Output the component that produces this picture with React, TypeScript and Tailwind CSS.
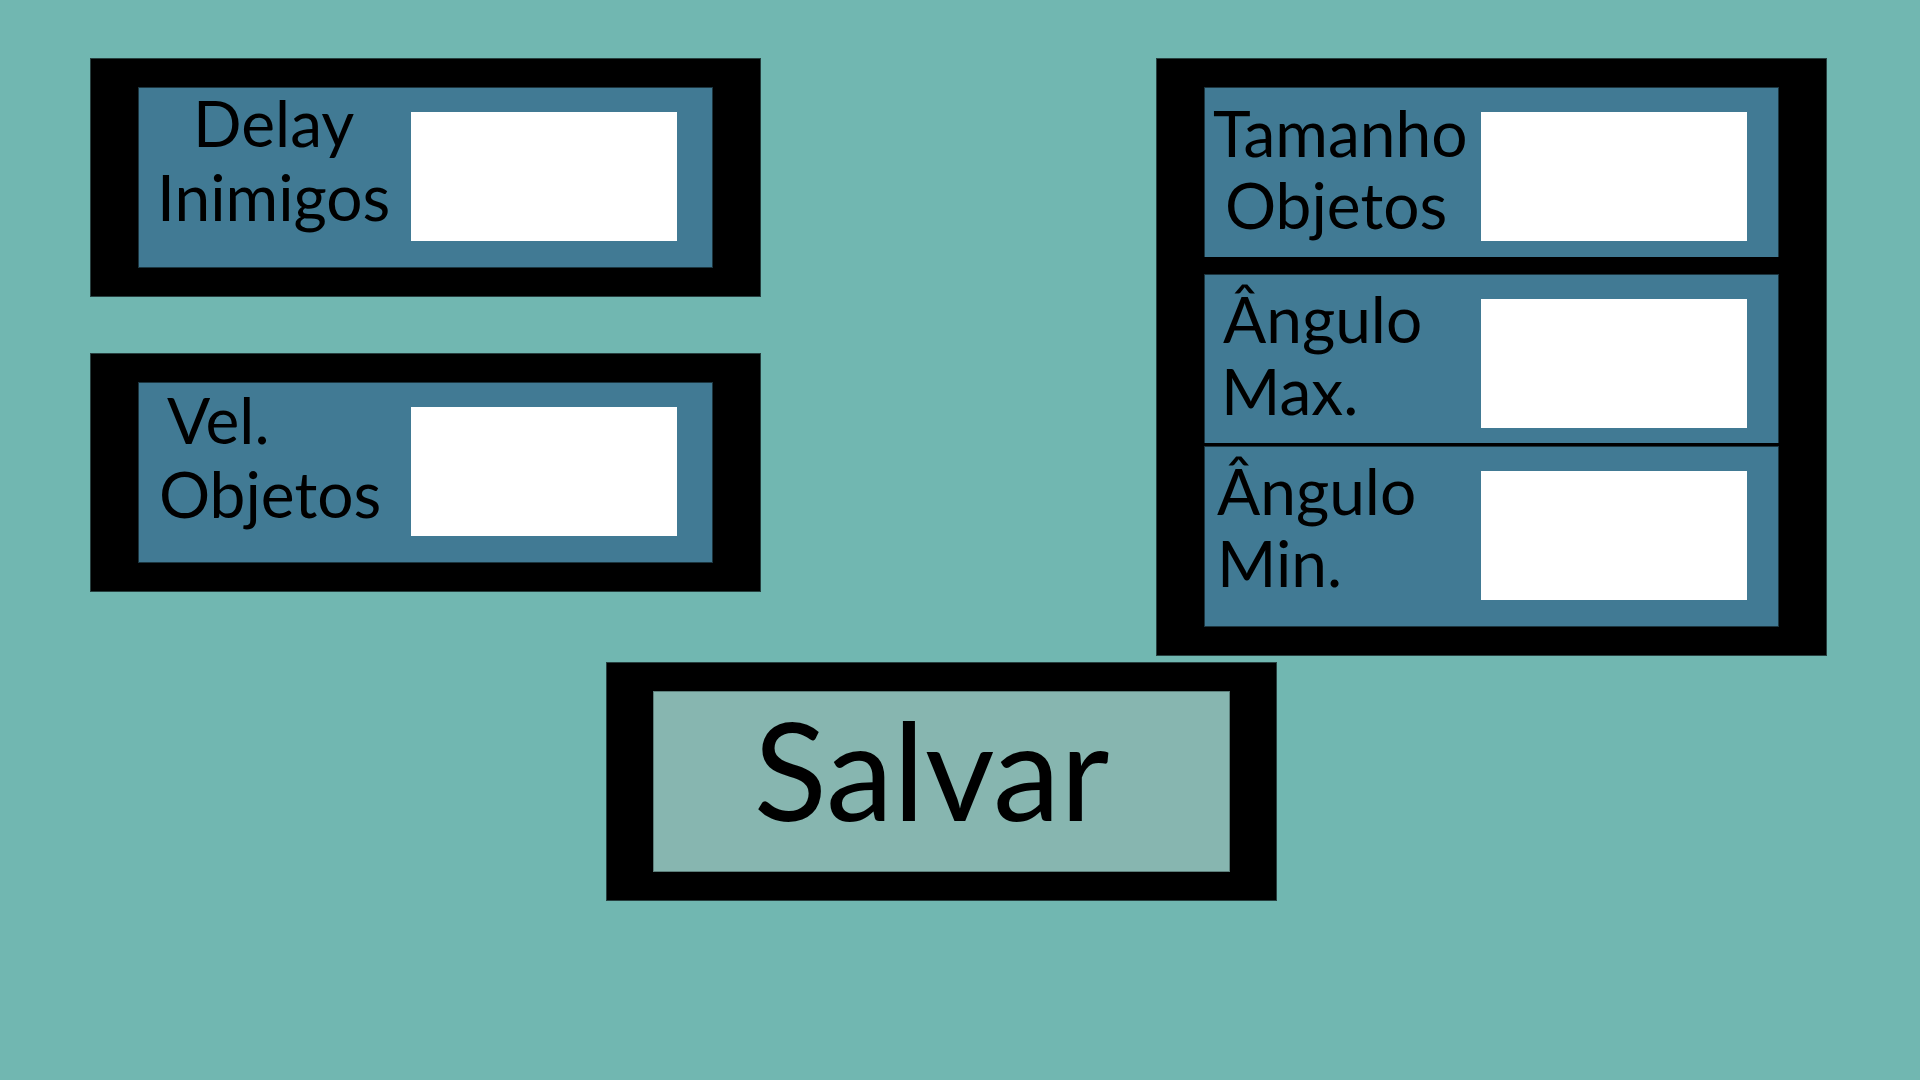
import type { ReactNode } from "react";

type FieldProps = {
  id: string;
  lines: { text: string; className?: string }[];
  labelClass: string;
  rowClass: string;
};

function Field({ id, lines, labelClass, rowClass }: FieldProps) {
  return (
    <div className={`flex items-start justify-between border-[#1c353f] bg-[#417a94] ${rowClass}`}>
      <label htmlFor={id} className={`text-[64px] whitespace-nowrap ${labelClass}`}>
        {lines.map((line) => (
          <span key={line.text} className={`block ${line.className ?? ""}`}>
            {line.text}
          </span>
        ))}
      </label>
      <input
        id={id}
        type="text"
        className="mt-6 h-[129px] w-[266px] shrink-0 bg-white px-4 text-[64px] outline-none"
      />
    </div>
  );
}

function Panel({ children }: { children: ReactNode }) {
  return (
    <section className="w-full max-w-[671px] border border-[#273f3f] bg-black px-[47px] py-7">
      {children}
    </section>
  );
}

export default function App() {
  return (
    <main className="min-h-screen bg-[#71b7b1] pt-[58px] pr-[93px] pb-16 pl-[90px] font-['Lato',sans-serif] text-black">
      <form onSubmit={(e) => e.preventDefault()}>
        <div className="flex items-start justify-between gap-8">
          <div className="flex w-full max-w-[671px] flex-col gap-14">
            <Panel>
              <Field
                id="delay-inimigos"
                lines={[{ text: "Delay" }, { text: "Inimigos" }]}
                labelClass="-mt-0.5 pl-[18px] text-center leading-[74px]"
                rowClass="border pr-[35px] pb-[26px]"
              />
            </Panel>
            <Panel>
              <Field
                id="vel-objetos"
                lines={[{ text: "Vel.", className: "pl-2" }, { text: "Objetos" }]}
                labelClass="pl-5 leading-[74px]"
                rowClass="border pr-[35px] pb-[26px]"
              />
            </Panel>
          </div>
          <Panel>
            <div className="flex flex-col">
              <Field
                id="tamanho-objetos"
                lines={[{ text: "Tamanho" }, { text: "Objetos", className: "pl-3" }]}
                labelClass="pl-2 pt-[9px] leading-[72px]"
                rowClass="border-x border-t pr-[31px] pb-4"
              />
              <div className="mt-[17px]">
                <Field
                  id="angulo-max"
                  lines={[{ text: "Ângulo", className: "pl-0.5" }, { text: "Max." }]}
                  labelClass="pl-4 pt-2 leading-[72px]"
                  rowClass="border-x border-t pr-[31px] pb-[15px]"
                />
              </div>
              <div className="mt-[3px]">
                <Field
                  id="angulo-min"
                  lines={[{ text: "Ângulo" }, { text: "Min." }]}
                  labelClass="pl-3 pt-2 leading-[72px]"
                  rowClass="border pr-[31px] pb-[26px]"
                />
              </div>
            </div>
          </Panel>
        </div>
        <div className="mt-1.5 flex justify-center pr-[34px]">
          <button
            type="submit"
            className="w-full max-w-[671px] border border-[#273f3f] bg-black px-[46px] py-7"
          >
            <span className="block border border-[#5d7f7b] bg-[#87b6b0] pt-px pr-5 pb-[26px] text-[135px] leading-[152px]">
              Salvar
            </span>
          </button>
        </div>
      </form>
    </main>
  );
}
